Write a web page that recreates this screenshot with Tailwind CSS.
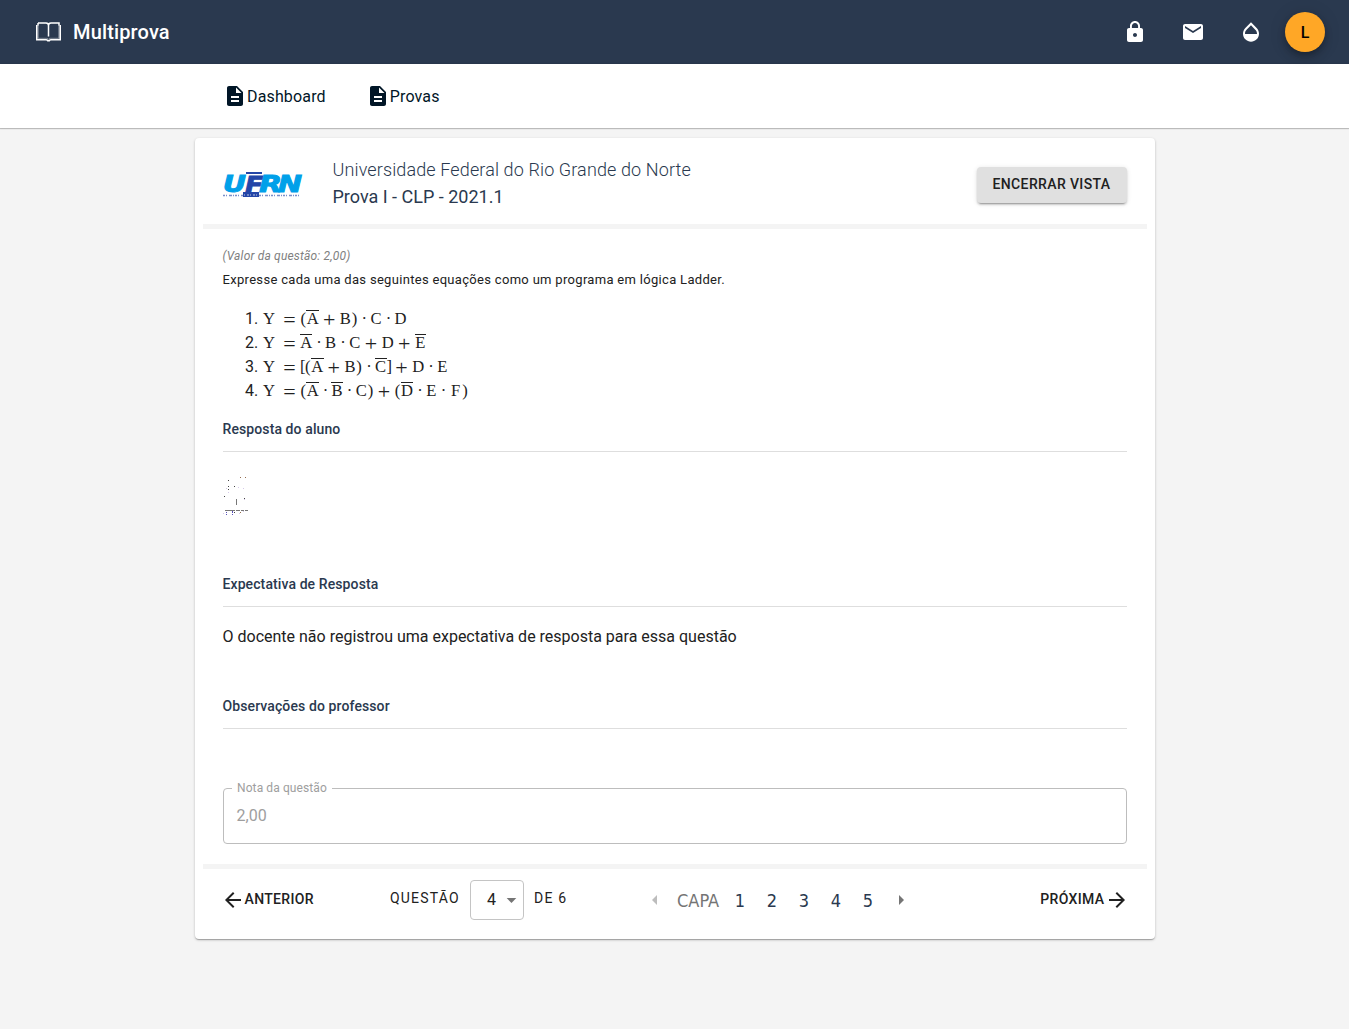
<!DOCTYPE html>
<html lang="pt-BR">
<head>
<meta charset="utf-8">
<title>Multiprova</title>
<script src="https://cdn.jsdelivr.net/npm/@tailwindcss/browser@4"></script>
</head>
<body class="min-h-screen bg-[#f4f4f4] font-['Roboto',sans-serif] text-base text-[#212121]">
<header class="flex h-16 items-center bg-[#2a394f] pl-9 pr-6 text-white">
  <svg class="h-5 w-[25px]" viewBox="0 0 25 20" fill="none" stroke="currentColor"><path d="M2 1h8q2.500 0 2.500 2.500Q12.500 1 15 1h8v2.500M2 1v2.500M12.500 3v11.500" stroke-width="1.500"/><path d="M.8 3v14.800h9.500q1.200 0 1.500 1h1.400q.3-1 1.500-1h9.500V3" stroke-width="1.600"/><path d="M2.200 3v13.300h8.300q1.500 0 2 .9.5-.9 2-.9h8.300V3" stroke-width=".7" opacity=".6"/></svg>
  <span class="ml-3 text-xl font-medium tracking-[0.15px]">Multiprova</span>
  <div class="ml-auto flex items-center">
    <svg class="size-6" viewBox="0 0 24 24" fill="currentColor"><path d="M18 8h-1V6c0-2.760-2.240-5-5-5S7 3.240 7 6v2H6c-1.100 0-2 .9-2 2v10c0 1.100.9 2 2 2h12c1.100 0 2-.9 2-2V10c0-1.100-.9-2-2-2zm-6 9c-1.100 0-2-.9-2-2s.9-2 2-2 2 .9 2 2-.9 2-2 2zm3.100-9H8.900V6c0-1.710 1.390-3.100 3.100-3.100s3.100 1.390 3.100 3.100v2z"/></svg>
    <svg class="ml-[34px] size-6" viewBox="0 0 24 24" fill="currentColor"><path d="M20 4H4c-1.100 0-1.990.9-1.990 2L2 18c0 1.100.9 2 2 2h16c1.100 0 2-.9 2-2V6c0-1.100-.9-2-2-2zm0 4l-8 5-8-5V6l8 5 8-5v2z"/></svg>
    <svg class="ml-[34px] size-6" viewBox="0 0 24 24" fill="currentColor"><path d="M17.660 8L12 2.350 6.340 8C4.780 9.560 4 11.640 4 13.640s.78 4.110 2.340 5.670 3.610 2.350 5.660 2.350 4.100-.79 5.660-2.350S20 15.640 20 13.640 19.220 9.560 17.660 8zM6 14c.01-2 .62-3.270 1.760-4.400L12 5.270l4.240 4.380C17.380 10.770 17.990 12 18 14H6z"/></svg>
    <div class="ml-[22px] flex size-10 items-center justify-center rounded-full bg-[#ffa726] pt-px text-base font-medium text-black shadow-[0_3px_5px_-1px_rgba(0,0,0,0.2),0_6px_10px_rgba(0,0,0,0.14),0_1px_18px_rgba(0,0,0,0.12)]">L</div>
  </div>
</header>
<nav class="flex h-16 items-center gap-10 bg-white pl-[223px] tracking-[0.15px] text-[#011627] shadow-[0_1px_1px_rgba(0,0,0,0.2),0_0_2px_rgba(0,0,0,0.12)]">
  <a class="flex items-center"><svg class="size-6" viewBox="0 0 24 24" fill="currentColor"><path d="M14 2H6c-1.100 0-1.990.9-1.990 2L4 20c0 1.100.89 2 1.990 2H18c1.100 0 2-.9 2-2V8l-6-6zm2 16H8v-2h8v2zm0-4H8v-2h8v2zm-3-5V3.500L18.500 9H13z"/></svg><span class="pt-0.5">Dashboard</span></a>
  <a class="flex items-center"><svg class="size-6" viewBox="0 0 24 24" fill="currentColor"><path d="M14 2H6c-1.100 0-1.990.9-1.990 2L4 20c0 1.100.89 2 1.990 2H18c1.100 0 2-.9 2-2V8l-6-6zm2 16H8v-2h8v2zm0-4H8v-2h8v2zm-3-5V3.500L18.500 9H13z"/></svg><span class="pt-0.5">Provas</span></a>
</nav>
<main class="ml-[194.5px] mt-[10px] h-[801px] w-[960px] rounded bg-white px-2 shadow-[0_1px_3px_rgba(0,0,0,0.2),0_1px_1px_rgba(0,0,0,0.14),0_2px_1px_-1px_rgba(0,0,0,0.12)]">
  <div class="flex h-[91px] items-start border-b-[5px] border-[#f4f4f4] pl-5 pr-5 text-[#2a394f]">
    <svg class="mt-[33px] h-[28px] w-[80px] overflow-visible" viewBox="0 0 80 28">
      <g fill="#00a0e9" stroke="#00a0e9" stroke-width="1" font-family="DejaVu Sans" font-weight="bold" font-style="oblique" font-size="23">
        <text x="0" y="20.500" textLength="23" lengthAdjust="spacingAndGlyphs">U</text>
        <text x="36" y="20.500" textLength="23" lengthAdjust="spacingAndGlyphs">R</text>
        <text x="55" y="20.500" textLength="24" lengthAdjust="spacingAndGlyphs">N</text>
      </g>
      <path d="M23 1h16v2H23zM20 21h16v5H20z" fill="#2446a8"/>
      <text x="22" y="22" textLength="18" lengthAdjust="spacingAndGlyphs" fill="#2446a8" stroke="#2446a8" stroke-width=".8" font-family="DejaVu Sans" font-weight="bold" font-style="oblique" font-size="23">F</text>
      <path d="M0 24.500h20M36 24.500h40" stroke="#2446a8" stroke-width="1.500" stroke-dasharray="2 1 1 2 3 1 1 1" opacity=".6"/>
      <path d="M21 24h14" stroke="#fff" stroke-width="1" stroke-dasharray="1 2 2 1" opacity=".7"/>
    </svg>
    <div class="ml-[30px] mt-[18px] text-lg leading-[27px]"><p class="font-light tracking-[0.12px]">Universidade Federal do Rio Grande do Norte</p><p>Prova I - CLP - 2021.1</p></div>
    <button class="ml-auto mt-[29px] h-9 w-[150px] rounded bg-[#e0e0e0] pb-0.5 text-sm font-medium tracking-[0.37px] text-[#212121] shadow-[0_3px_1px_-2px_rgba(0,0,0,0.2),0_2px_2px_rgba(0,0,0,0.14),0_1px_5px_rgba(0,0,0,0.12)]">ENCERRAR VISTA</button>
  </div>
  <div class="h-[640px] border-b-[5px] border-[#f4f4f4] px-5">
    <p class="pt-[17px] text-xs leading-5 italic tracking-[0.18px] text-[#808080]">(Valor da questão: 2,00)</p>
    <p class="mt-1 text-[13px] leading-5 tracking-[0.31px]">Expresse cada uma das seguintes equações como um programa em lógica Ladder.</p>
    <ol id="equations" class="mt-[17px]"></ol>
    <h2 class="mt-4 h-[33px] border-b border-[#dedede] text-sm font-medium tracking-[0.1px] text-[#2a394f]">Resposta do aluno</h2>
    <svg class="mt-[24px] h-[42px] w-[28px]" viewBox="0 0 28 42" shape-rendering="crispEdges"><path d="M13 23h1v6h-1zM2 34h10v1H2zM13 34h4v1h-4zM18 34h3v1h-3zM22 34h3v1h-3z" fill="#777"/><path d="M5 4h1v1H5zM5 10h1v1H5zM5 13h1v1H5zM1 20h1v1H1zM11 10h1v1h-1zM21 22h1v1h-1zM11 36h1v1h-1z" fill="#444"/><path d="M17 1h1v1h-1zM22 1h1v1h-1zM17 36h1v1h-1z" fill="#956d4e"/><path d="M3 12h1v1H3zM15 11h1v1h-1zM20 12h1v1h-1zM21 23h1v1h-1zM5 16h1v1H5zM0 37h1v1H0zM16 37h1v1h-1zM20 35h1v1h-1z" fill="#d5c9e8"/><path d="M3 36h1v1H3zM3 38h1v1H3zM9 36h1v1H9zM9 38h1v1H9zM9 35h1v1H9z" fill="#5850b8"/></svg>
    <h2 class="mt-[56px] h-[33px] border-b border-[#dedede] text-sm font-medium tracking-[0.1px] text-[#2a394f]">Expectativa de Resposta</h2>
    <p class="mt-[18px]">O docente não registrou uma expectativa de resposta para essa questão</p>
    <h2 class="mt-[47px] h-[33px] border-b border-[#dedede] text-sm font-medium tracking-[0.11px] text-[#2a394f]">Observações do professor</h2>
    <div class="relative mt-[59px] h-14 rounded border border-[#bdbdbd] px-[13px] pt-[15px] text-[#9e9e9e]">
      <span class="absolute left-[8.500px] top-[-9px] bg-white px-[5px] text-xs tracking-[0.1px]">Nota da questão</span>2,00
    </div>
  </div>
  <div class="flex h-[62px] items-center pl-[18px] pr-[18px] text-sm">
    <div class="flex w-[169.5px] items-center font-medium tracking-[0.35px]"><svg class="size-6" viewBox="0 0 24 24" fill="currentColor"><path d="M20 11H7.830l5.590-5.590L12 4l-8 8 8 8 1.410-1.410L7.830 13H20v-2z"/></svg><span class="pb-0.5">ANTERIOR</span></div>
    <span class="mb-1 w-20 tracking-[1.2px]">QUESTÃO</span>
    <div class="flex h-10 w-[54px] items-center rounded border border-[#c4c4c4] pl-4 text-base">4<svg class="ml-1 size-6 text-[#757575]" viewBox="0 0 24 24" fill="currentColor"><path d="M7 10l5 5 5-5z"/></svg></div>
    <span class="mb-1 ml-[10px] w-[108.5px] tracking-[1.2px]">DE 6</span>
    <svg class="size-6 text-[#bdbdbd]" viewBox="0 0 24 24" fill="currentColor"><path d="M14 7l-5 5 5 5V7z"/></svg>
    <div class="ml-[10.500px] flex pt-0.5 font-['DejaVu_Sans_Condensed','DejaVu_Sans',sans-serif] text-lg text-[#2a394f] [font-stretch:condensed]"><span class="w-[47px] text-[#757575]">CAPA</span><span class="w-8 text-center">1</span><span class="w-8 text-center">2</span><span class="w-8 text-center">3</span><span class="w-8 text-center">4</span><span class="w-8 text-center">5</span></div>
    <svg class="ml-[4.500px] size-6 text-[#757575]" viewBox="0 0 24 24" fill="currentColor"><path d="M10 17l5-5-5-5v10z"/></svg>
    <div class="ml-auto flex items-center font-medium tracking-[0.37px]"><span class="pb-0.5">PRÓXIMA</span><svg class="size-6" viewBox="0 0 24 24" fill="currentColor"><path d="M12 4l-1.410 1.410L16.170 11H4v2h12.170l-5.580 5.590L12 20l8-8z"/></svg></div>
  </div>
</main>
<script>
// "!" before a letter marks a negated variable (overline)
const widths = {A:'w-[.75em]',B:'w-[.708em]',C:'w-[.722em]',D:'w-[.764em]',E:'w-[.681em]',F:'w-[.76em]','(':'w-[.389em]',')':'w-[.389em]','[':'w-[.278em]',']':'w-[.278em]'};
const equations = ['(!A+B)·C·D','!A·B·C+D+!E','[(!A+B)·!C]+D·E','(!A·!B·C)+(!D·E·F)'];
document.getElementById('equations').innerHTML = equations.map((eq, i) => {
  const terms = (eq.match(/!?./g) || []).map(t => {
    const c = t.replace('!', '');
    if (c === '+') return '<span class="mx-[.232em] flex h-6 w-[.778em] items-center justify-center pt-0.5"><b class="text-[22px] font-normal">+</b></span>';
    if (c === '·') return '<span class="mx-[.232em] w-[.278em] text-center">·</span>';
    return '<span class="relative text-center ' + widths[c] + '">' + c + (t.length > 1 ? '<i class="absolute inset-x-0 top-[3px] h-px bg-[#212121]"></i>' : '') + '</span>';
  }).join('');
  return '<li class="flex h-6 pl-[22.500px] leading-6"><span class="w-[18px]">' + (i + 1) + '.</span><span class="flex font-[Liberation_Serif] text-[16.6px]"><span class="w-[20px]">Y</span><span class="flex h-6 w-[13px] items-center justify-center pt-0.5"><b class="text-[22px] font-normal">=</b></span><span class="w-[4px]"></span>' + terms + '</span></li>';
}).join('');
</script>
</body>
</html>
